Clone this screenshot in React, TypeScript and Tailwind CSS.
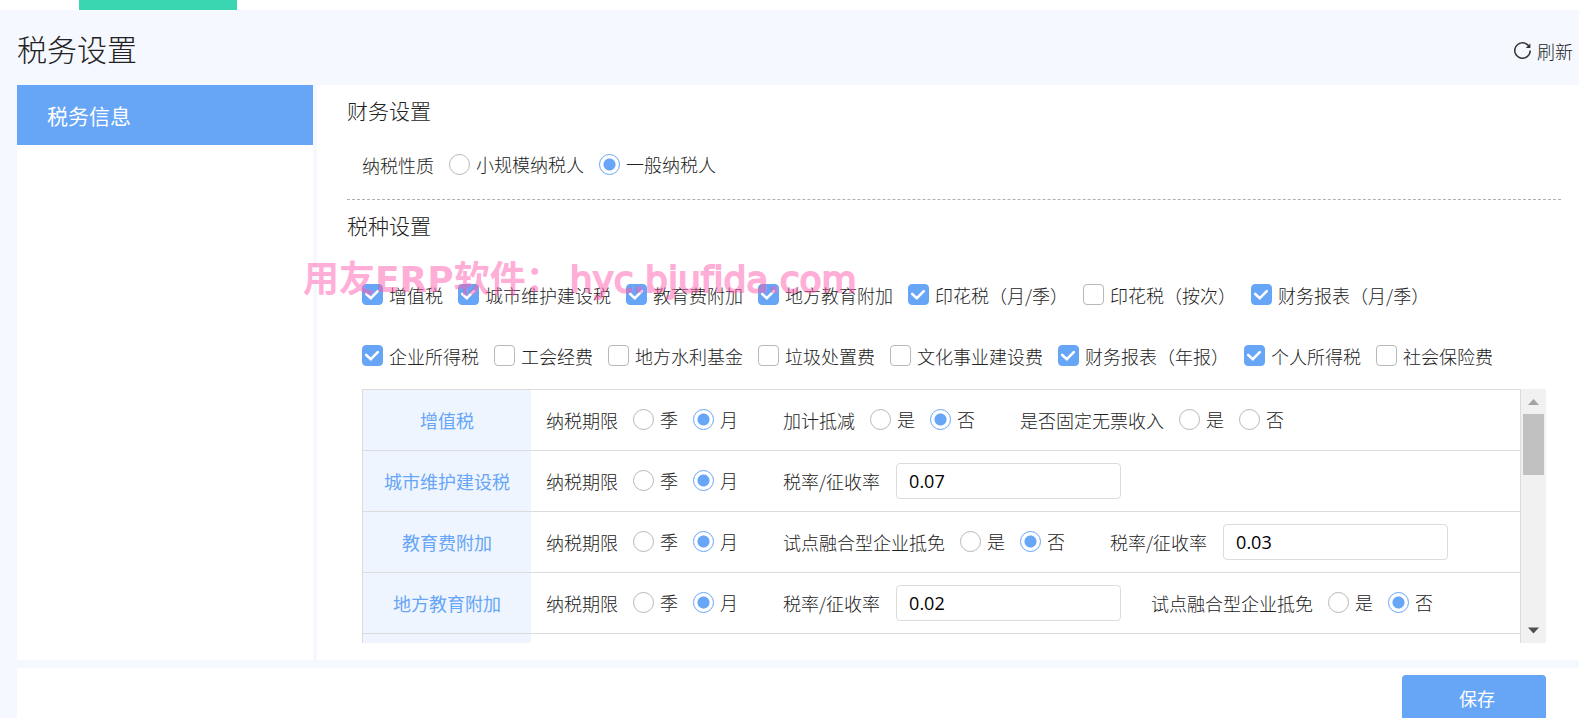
import { useState } from 'react';

type Field = {
  label: string;
  options?: string[];
  selected?: string;
  rate?: string;
};

const taxTypes = [
  [
    { name: '增值税', on: true },
    { name: '城市维护建设税', on: true },
    { name: '教育费附加', on: true },
    { name: '地方教育附加', on: true },
    { name: '印花税（月/季）', on: true },
    { name: '印花税（按次）', on: false },
    { name: '财务报表（月/季）', on: true },
  ],
  [
    { name: '企业所得税', on: true },
    { name: '工会经费', on: false },
    { name: '地方水利基金', on: false },
    { name: '垃圾处置费', on: false },
    { name: '文化事业建设费', on: false },
    { name: '财务报表（年报）', on: true },
    { name: '个人所得税', on: true },
    { name: '社会保险费', on: false },
  ],
];

const period: Field = { label: '纳税期限', options: ['季', '月'], selected: '月' };
const pilot: Field = { label: '试点融合型企业抵免', options: ['是', '否'], selected: '否' };

const taxRows: { name: string; fields: Field[] }[] = [
  {
    name: '增值税',
    fields: [
      period,
      { label: '加计抵减', options: ['是', '否'], selected: '否' },
      { label: '是否固定无票收入', options: ['是', '否'] },
    ],
  },
  { name: '城市维护建设税', fields: [period, { label: '税率/征收率', rate: '0.07' }] },
  { name: '教育费附加', fields: [period, pilot, { label: '税率/征收率', rate: '0.03' }] },
  { name: '地方教育附加', fields: [period, { label: '税率/征收率', rate: '0.02' }, pilot] },
];

function Radio({ name, label, checked }: { name: string; label: string; checked: boolean }) {
  return (
    <label className="flex items-center gap-1.5 mr-[15px] pb-0.5 cursor-pointer">
      <input
        type="radio"
        name={name}
        defaultChecked={checked}
        className="appearance-none size-[21px] shrink-0 rounded-full border border-[#b8b8b8] bg-white checked:border-[#67a5f6] checked:bg-[radial-gradient(circle,#67a5f6_5.5px,transparent_6.5px)]"
      />
      {label}
    </label>
  );
}

function Checkbox({ label, on }: { label: string; on: boolean }) {
  const [checked, setChecked] = useState(on);
  return (
    <label className="flex items-center gap-1.5 cursor-pointer">
      <span className="relative size-[21px] shrink-0">
        <input
          type="checkbox"
          checked={checked}
          onChange={e => setChecked(e.target.checked)}
          className="block appearance-none size-[21px] rounded border border-[#b8b8b8] bg-white checked:border-[#67a5f6] checked:bg-[#67a5f6]"
        />
        {checked && (
          <svg viewBox="0 0 21 21" className="absolute inset-0 pointer-events-none" fill="none" stroke="#fff" strokeWidth="2.6" strokeLinecap="round">
            <path d="M4.2 10 8.8 14.2 15.8 7.2" />
          </svg>
        )}
      </span>
      {label}
    </label>
  );
}

function TaxField({ id, field }: { id: string; field: Field }) {
  if (field.rate) {
    return (
      <div className="flex items-center mr-[30px]">
        <label htmlFor={id}>{field.label}</label>
        <input
          id={id}
          defaultValue={field.rate}
          className="ml-4 w-[225px] h-9 px-3 rounded border border-[#dcdcdc] text-black font-normal font-['Open_Sans',sans-serif] outline-none"
        />
      </div>
    );
  }
  return (
    <div role="radiogroup" aria-label={field.label} className="flex items-center mr-[30px]">
      <span className="mr-[15px]">{field.label}</span>
      {field.options?.map(o => (
        <Radio key={o} name={id} label={o} checked={o === field.selected} />
      ))}
    </div>
  );
}

export default function App() {
  return (
    <div className="h-screen overflow-hidden flex flex-col bg-[#f5f8ff] text-[#222] text-[18px] leading-6 font-light whitespace-nowrap font-['Noto_Sans_CJK_SC',sans-serif]">
      <div className="h-2.5 shrink-0 bg-white">
        <div className="ml-[79px] w-[158px] h-full bg-[#3ad6b2]" />
      </div>

      <header className="h-[75px] shrink-0 flex items-center justify-between pl-[17px] pr-1.5">
        <h1 className="text-[30px] leading-10">税务设置</h1>
        <button type="button" className="flex items-center gap-1.5 pt-1.5">
          <svg viewBox="0 0 17 17" className="size-[17px]" fill="none" stroke="#333" strokeWidth="1.5">
            <path d="M16.2 8.5a7.7 7.7 0 1 1-2.4-5.6l1.4 1.6" />
            <path d="M16.4 1.4v4.6h-4.6z" fill="#333" stroke="none" />
          </svg>
          刷新
        </button>
      </header>

      <div className="flex-1 min-h-0 flex gap-1 pl-[17px]">
        <nav className="w-[296px] shrink-0 bg-white">
          <a href="#tax" className="flex items-center h-[60px] pl-[30px] bg-[#67a5f6] text-white text-[21px] font-normal">
            税务信息
          </a>
        </nav>

        <main className="relative flex-1 min-w-0 flex flex-col bg-white pl-[30px] pr-[18px] pb-[17px]">
          <h2 className="pt-2.5 text-[21px] leading-[30px]">财务设置</h2>
          <div role="radiogroup" aria-label="纳税性质" className="flex items-center h-[75px] pt-1.5 pl-[15px] border-b border-dashed border-[#b0b0b0]">
            <span className="mr-[15px]">纳税性质</span>
            <Radio name="nature" label="小规模纳税人" checked={false} />
            <Radio name="nature" label="一般纳税人" checked />
          </div>

          <h2 className="pt-2.5 text-[21px] leading-[30px]">税种设置</h2>
          <div className="pl-[15px] pt-6 pb-[3px]">
            {taxTypes.map((row, i) => (
              <div key={i} className="flex items-center gap-[15px] h-[61px]">
                {row.map(t => (
                  <Checkbox key={t.name} label={t.name} on={t.on} />
                ))}
              </div>
            ))}
          </div>

          <div className="flex-1 min-h-0 flex mx-[15px]">
            <div className="flex-1 min-w-0 overflow-hidden border-x border-[#dcdcdc]">
              <table className="w-full border-collapse">
                <tbody>
                  {taxRows.map((row, i) => (
                    <tr key={row.name} className="h-[61px] border-t border-[#dcdcdc]">
                      <th scope="row" className="w-[168px] bg-[#eef5fe] text-[#67a5f6] font-normal">
                        {row.name}
                      </th>
                      <td className="pl-[15px]">
                        <div className="flex items-center">
                          {row.fields.map((f, j) => (
                            <TaxField key={f.label} id={`tax-${i}-${j}`} field={f} />
                          ))}
                        </div>
                      </td>
                    </tr>
                  ))}
                  <tr className="h-[61px] border-t border-[#dcdcdc]">
                    <th scope="row" className="bg-[#eef5fe]" />
                    <td />
                  </tr>
                </tbody>
              </table>
            </div>
            {/* scrollbar */}
            <div className="w-[25px] shrink-0 flex flex-col items-center bg-[#f1f1f1]">
              <svg viewBox="0 0 25 25" className="size-[25px]">
                <path d="M7 16 12.5 10 18 16z" fill="#a3a3a3" />
              </svg>
              <div className="w-[21px] h-[61px] bg-[#c1c1c1]" />
              <svg viewBox="0 0 25 25" className="size-[25px] mt-auto">
                <path d="M7 9.5h11L12.5 15.5z" fill="#505050" />
              </svg>
            </div>
          </div>

          {/* watermark */}
          <div className="absolute left-[-14px] top-[168px] text-[36px] leading-[54px] text-[#ff5fb0] opacity-50 pointer-events-none font-bold [font-variant-ligatures:none] font-['DejaVu_Sans','Noto_Sans_CJK_SC',sans-serif]">
            用友ERP软件：<span className="ml-2 font-normal [-webkit-text-stroke:2px_#ff5fb0]">hyc.bjufida.com</span>
          </div>
        </main>
      </div>

      <footer className="mt-2 ml-[17px] h-[50px] shrink-0 flex items-start justify-end bg-white pt-[7px] pr-[33px]">
        <button type="button" className="w-36 h-[46px] pl-1.5 shrink-0 rounded bg-[#67a5f6] text-white font-normal">
          保存
        </button>
      </footer>
    </div>
  );
}
